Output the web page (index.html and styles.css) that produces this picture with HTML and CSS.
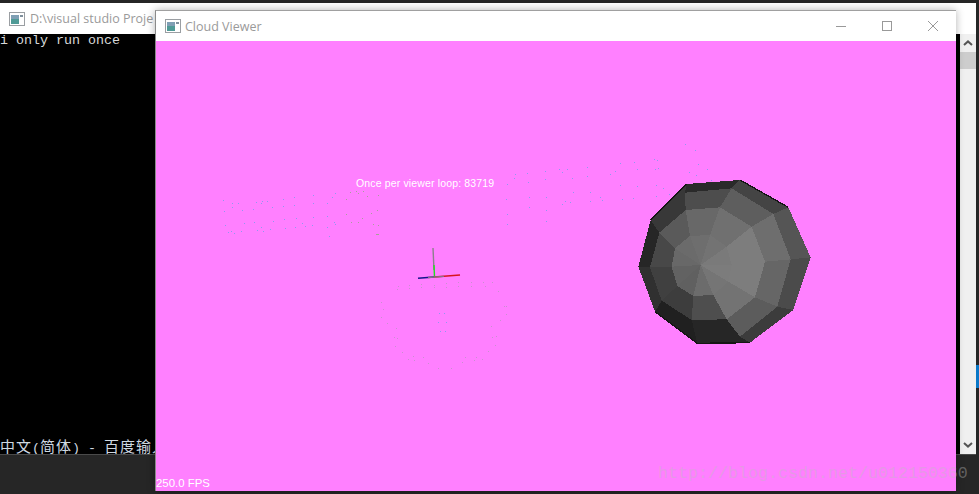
FILE: index.html
```html
<!DOCTYPE html>
<html lang="en">
<head>
<meta charset="utf-8">
<title>Cloud Viewer</title>
<link rel="stylesheet" href="styles.css">
</head>
<body>
<main class="desktop">
  <section class="console">
    <header class="titlebar console-title">
      <svg class="app-icon" viewBox="0 0 16 14"><rect x=".5" y=".5" width="15" height="13" fill="#fff" stroke="#9a9ea2"/><rect x="2" y="3" width="8" height="9" fill="#4f9a96"/><rect x="2" y="3" width="8" height="4" fill="#7f9fb4"/><rect x="11" y="3" width="3" height="2" fill="#7f8f9c"/></svg>
      <span class="title-text">D:\visual studio Proje</span>
    </header>
    <div class="console-main">
      <div class="console-screen">
        <div class="console-line first-line">i only run once</div>
        <div class="console-line ime-line">中文<span class="ascii">(</span>简体<span class="ascii">) - </span>百度输入</div>
      </div>
      <div class="scrollbar">
        <svg class="scroll-arrow" viewBox="0 0 10 6"><path d="M1 5l4-3.600L9 5" fill="none" stroke="#555" stroke-width="2"/></svg>
        <div class="scroll-thumb"></div>
        <div class="scroll-track"></div>
        <svg class="scroll-arrow" viewBox="0 0 10 6"><path d="M1 1l4 3.600L9 1" fill="none" stroke="#555" stroke-width="2"/></svg>
      </div>
    </div>
  </section>
  <div class="accent-sliver"></div>

  <section class="viewer">
    <header class="titlebar viewer-title">
      <svg class="app-icon" viewBox="0 0 16 14"><rect x=".5" y=".5" width="15" height="13" fill="#fff" stroke="#9a9ea2"/><rect x="2" y="3" width="8" height="9" fill="#4f9a96"/><rect x="2" y="3" width="8" height="4" fill="#7f9fb4"/><rect x="11" y="3" width="3" height="2" fill="#7f8f9c"/></svg>
      <span class="title-text">Cloud Viewer</span>
      <div class="window-controls">
        <svg class="ctl" viewBox="0 0 46 31"><path d="M18 15.500h10" stroke="#999" fill="none"/></svg>
        <svg class="ctl" viewBox="0 0 46 31"><rect x="18.500" y="10.500" width="9" height="9" stroke="#999" fill="none"/></svg>
        <svg class="ctl" viewBox="0 0 46 31"><path d="M18 10l10 10M28 10L18 20" stroke="#999" fill="none"/></svg>
      </div>
    </header>
    <div class="canvas">
      <svg class="scene" viewBox="156 41 800 450">
        <path class="pts-blue" d="M223 200h1v1h-1zM224 211h1v1h-1zM232 203h1v1h-1zM232 207h1v1h-1zM238 203h1v1h-1zM242 210h1v1h-1zM256 202h1v1h-1zM261 203h1v1h-1zM262 201h1v1h-1zM267 201h1v1h-1zM272 207h1v1h-1zM253 209h1v1h-1zM283 199h1v1h-1zM283 206h1v1h-1zM294 197h1v1h-1zM294 205h1v1h-1zM313 195h1v1h-1zM313 203h1v1h-1zM327 203h1v1h-1zM332 197h1v1h-1zM335 193h1v1h-1zM327 216h1v1h-1zM313 217h1v1h-1zM334 222h1v1h-1zM335 224h1v1h-1zM327 227h1v1h-1zM329 236h1v1h-1zM225 225h1v1h-1zM228 232h1v1h-1zM231 231h1v1h-1zM234 233h1v1h-1zM241 231h1v1h-1zM244 223h1v1h-1zM254 222h1v1h-1zM257 230h1v1h-1zM261 227h1v1h-1zM263 231h1v1h-1zM270 229h1v1h-1zM273 221h1v1h-1zM284 219h1v1h-1zM285 228h1v1h-1zM296 218h1v1h-1zM295 227h1v1h-1zM302 223h1v1h-1zM305 226h1v1h-1zM312 225h1v1h-1zM515 174h1v1h-1zM514 178h1v1h-1zM527 173h1v1h-1zM507 184h1v1h-1zM528 182h1v1h-1zM545 171h1v1h-1zM545 179h1v1h-1zM559 169h1v1h-1zM562 172h1v1h-1zM567 169h1v1h-1zM572 178h1v1h-1zM587 167h1v1h-1zM587 176h1v1h-1zM610 174h1v1h-1zM615 171h1v1h-1zM620 163h1v1h-1zM634 162h1v1h-1zM637 169h1v1h-1zM654 159h1v1h-1zM657 160h1v1h-1zM655 169h1v1h-1zM658 168h1v1h-1zM685 144h1v1h-1zM695 150h1v1h-1zM698 164h1v1h-1zM689 172h1v1h-1zM696 175h1v1h-1zM707 169h1v1h-1zM711 180h1v1h-1zM506 199h1v1h-1zM529 197h1v1h-1zM529 207h1v1h-1zM546 197h1v1h-1zM546 210h1v1h-1zM507 214h1v1h-1zM507 224h1v1h-1zM546 221h1v1h-1zM562 204h1v1h-1zM565 201h1v1h-1zM570 202h1v1h-1zM573 192h1v1h-1zM590 192h1v1h-1zM590 201h1v1h-1zM600 197h1v1h-1zM602 200h1v1h-1zM620 185h1v1h-1zM622 199h1v1h-1zM633 198h1v1h-1zM637 186h1v1h-1zM656 185h1v1h-1zM656 196h1v1h-1zM663 188h1v1h-1zM669 194h1v1h-1zM439 313h1v1h-1zM444 313h1v1h-1zM438 322h1v1h-1zM446 322h1v1h-1zM440 331h1v1h-1zM445 331h1v1h-1z"/>
        <path class="pts-grey" d="M346 199h1v1h-1zM350 192h1v1h-1zM356 191h1v1h-1zM358 193h1v1h-1zM363 191h1v1h-1zM367 196h1v1h-1zM378 195h1v1h-1zM346 214h1v1h-1zM351 222h1v1h-1zM358 222h1v1h-1zM362 218h1v1h-1zM371 213h1v1h-1zM377 210h1v1h-1zM373 224h1v1h-1zM378 225h1v1h-1zM376 234h3v1h-3z"/>
        <path class="pts-faint" d="M381 302h1v1h-1zM383 309h1v1h-1zM381 317h1v1h-1zM387 323h1v1h-1zM396 328h1v1h-1zM394 337h1v1h-1zM397 338h1v1h-1zM395 346h1v1h-1zM402 352h1v1h-1zM413 356h1v1h-1zM408 359h1v1h-1zM414 360h1v1h-1zM423 357h1v1h-1zM428 363h1v1h-1zM438 368h1v1h-1zM451 368h1v1h-1zM462 362h1v1h-1zM465 357h1v1h-1zM474 360h1v1h-1zM476 357h1v1h-1zM482 359h1v1h-1zM488 351h1v1h-1zM495 345h1v1h-1zM492 337h1v1h-1zM496 336h1v1h-1zM491 326h1v1h-1zM500 320h1v1h-1zM506 314h1v1h-1zM504 306h1v1h-1zM506 306h1v1h-1zM398 286h1v1h-1zM409 285h1v1h-1zM421 284h1v1h-1zM421 287h1v1h-1zM434 285h1v1h-1zM434 287h1v1h-1zM446 283h1v1h-1zM446 287h1v1h-1zM458 282h1v1h-1zM458 286h1v1h-1zM471 282h1v1h-1zM471 286h1v1h-1zM483 282h1v1h-1zM492 282h1v1h-1zM485 286h1v1h-1zM498 291h1v1h-1zM409 288h1v1h-1zM397 289h1v1h-1z"/>
        <g class="axes">
          <path d="M433 248L434 270" stroke="#8b7f8b"/>
          <path d="M434 265L434.500 277" stroke="#22dd22"/>
          <path d="M434 277L460 275" stroke="#d8141e"/>
          <path d="M418 278.200L434 277" stroke="#14148c"/>
          <path d="M428 277.500L444 276.400" stroke="#8a6f8a"/>
        </g>
        <g transform="translate(620 170) scale(.33333)" class="ball">
          <path fill="#151515" d="M92 150L200 42 360 30 505 112 572 262 520 420 390 518 232 520 105 425 55 290z"/>
          <path fill="#2a2a2a" d="M200 42L360 30 335 55 195 68z"/>
          <path fill="#444" d="M360 30L505 112 460 132 335 55z"/>
          <path fill="#555" d="M505 112L572 262 512 268 460 132z"/>
          <path fill="#4b4b4b" d="M572 262L520 420 472 410 512 268z"/>
          <path fill="#3c3c3c" d="M520 420L390 518 360 500 472 410z"/>
          <path fill="#262626" d="M390 518L232 520 215 450 320 448 360 500z"/>
          <path fill="#202020" d="M232 520L105 425 125 392 215 450z"/>
          <path fill="#303030" d="M105 425L55 290 90 292 125 392z"/>
          <path fill="#262626" d="M55 290L92 150 118 188 90 292z"/>
          <path fill="#383838" d="M92 150L200 42 195 68 197 120 118 188z"/>
          <path fill="#4d4d4d" d="M195 68L335 55 300 112 197 120z"/>
          <path fill="#5e5e5e" d="M335 55L460 132 395 170 300 112z"/>
          <path fill="#6e6e6e" d="M460 132L512 268 435 275 395 170z"/>
          <path fill="#666" d="M512 268L472 410 405 382 435 275z"/>
          <path fill="#5c5c5c" d="M472 410L360 500 320 448 405 382z"/>
          <path fill="#4e4e4e" d="M215 450L220 378 280 375 320 448z"/>
          <path fill="#3d3d3d" d="M125 392L172 348 220 378 215 450z"/>
          <path fill="#404040" d="M90 292L155 290 172 348 125 392z"/>
          <path fill="#484848" d="M118 188L165 235 155 290 90 292z"/>
          <path fill="#5a5a5a" d="M118 188L197 120 210 198 165 235z"/>
          <path fill="#686868" d="M197 120L300 112 270 195 210 198z"/>
          <path fill="#707070" d="M300 112L395 170 320 230 270 195z"/>
          <path fill="#7d7d7d" d="M395 170L435 275 405 382 325 335 335 285 320 230z"/>
          <path fill="#737373" d="M405 382L320 448 280 375 325 335z"/>
          <path fill="#6e6e6e" d="M210 198L270 195 242 285z"/>
          <path fill="#737373" d="M270 195L320 230 242 285z"/>
          <path fill="#7a7a7a" d="M320 230L335 285 242 285z"/>
          <path fill="#7c7c7c" d="M335 285L325 335 242 285z"/>
          <path fill="#757575" d="M325 335L280 375 242 285z"/>
          <path fill="#6c6c6c" d="M280 375L220 378 242 285z"/>
          <path fill="#606060" d="M220 378L172 348 242 285z"/>
          <path fill="#626262" d="M172 348L155 290 242 285z"/>
          <path fill="#686868" d="M155 290L165 235 242 285z"/>
          <path fill="#6b6b6b" d="M165 235L210 198 242 285z"/>
          <path class="rim" d="M92 150L200 42M360 30L505 112M105 425L232 520M232 520L390 518"/>
        </g>
      </svg>
      <div class="hud-text">Once per viewer loop: 83719</div>
      <div class="fps">250.0 FPS</div>
    </div>
  </section>
  <div class="watermark">http://blog.csdn.net/u012150360</div>
</main>
</body>
</html>
```
FILE: styles.css
```css
* { box-sizing: border-box; }
html, body { margin: 0; padding: 0; background: #262626; }
.desktop {
  position: relative;
  width: 979px;
  height: 494px;
  overflow: hidden;
  background: #262626;
}
.titlebar {
  display: flex;
  align-items: center;
  background: #fff;
  font-family: "Open Sans", "Liberation Sans", sans-serif;
  font-size: 12.5px;
  color: #9a9a9a;
  white-space: nowrap;
  overflow: hidden;
}
.app-icon { width: 16px; height: 14px; flex: none; }
.console {
  position: absolute;
  left: 0;
  top: 3px;
  width: 976px;
  height: 452px;
  display: flex;
  flex-direction: column;
  border-bottom: 1px solid #4a4a4a;
}
.console-title { height: 31px; flex: none; padding-left: 9px; gap: 5px; }
.console-main { flex: 1; display: flex; min-height: 0; }
.console-screen {
  flex: 1;
  background: #000;
  color: #d8d8d8;
  font-family: "Liberation Mono", "Noto Sans CJK SC", monospace;
  font-size: 13.33px;
  line-height: 16px;
  display: flex;
  flex-direction: column;
  justify-content: space-between;
  white-space: nowrap;
  overflow: hidden;
}
.first-line { margin-top: -1px; }
.ime-line {
  font-family: "Noto Sans CJK SC", sans-serif;
  font-size: 15px;
  letter-spacing: 1px;
  line-height: 10px;
  color: #cfd8e0;
}
.ascii {
  font-family: "Liberation Mono", monospace;
  font-size: 13.33px;
  letter-spacing: 0;
  white-space: pre;
}
.scrollbar {
  width: 16px;
  flex: none;
  background: #f0f0f0;
  display: flex;
  flex-direction: column;
  align-items: center;
}
.scroll-arrow { width: 10px; height: 6px; margin: 6px 0; flex: none; }
.scroll-thumb { width: 100%; height: 17px; flex: none; background: #cdcdcd; }
.scroll-track { flex: 1; }
.accent-sliver {
  position: absolute;
  left: 976px;
  top: 365px;
  width: 3px;
  height: 23px;
  background: #0a78c8;
}
.watermark {
  position: absolute;
  left: 658px;
  top: 464px;
  font-family: "Liberation Mono", monospace;
  font-size: 16.67px;
  line-height: 20px;
  color: rgba(190, 190, 190, .4);
  white-space: nowrap;
}
.viewer {
  position: absolute;
  left: 155px;
  top: 10px;
  width: 801px;
  height: 481px;
  display: flex;
  flex-direction: column;
  border-top: 1px solid #a0a0a0;
  border-left: 1px solid #8a8a8a;
  box-shadow: 0 0 8px rgba(0, 0, 0, .3);
}
.viewer-title { height: 30px; flex: none; padding-left: 9px; gap: 4px; }
.window-controls { margin-left: auto; display: flex; }
.ctl { width: 46px; height: 31px; flex: none; }
.canvas { position: relative; flex: 1; background: #ff80ff; }
.scene { position: absolute; inset: 0; width: 800px; height: 450px; display: block; }
.pts-blue { fill: #8f98f0; }
.pts-grey { fill: #a8a09a; }
.pts-faint { fill: #c98fd0; }
.axes path { fill: none; stroke-width: 1.4; }
.ball { shape-rendering: crispEdges; }
.rim { fill: none; stroke: #161616; stroke-width: 4; }
.hud-text {
  position: absolute;
  left: 200px;
  top: 136px;
  font-family: "Liberation Sans", sans-serif;
  font-size: 10.5px;
  line-height: 13px;
  letter-spacing: .15px;
  color: #fff;
  white-space: nowrap;
}
.fps {
  position: absolute;
  left: 0;
  bottom: 1px;
  font-family: "Liberation Sans", sans-serif;
  font-size: 11.4px;
  line-height: 14px;
  color: #fff;
}
```
